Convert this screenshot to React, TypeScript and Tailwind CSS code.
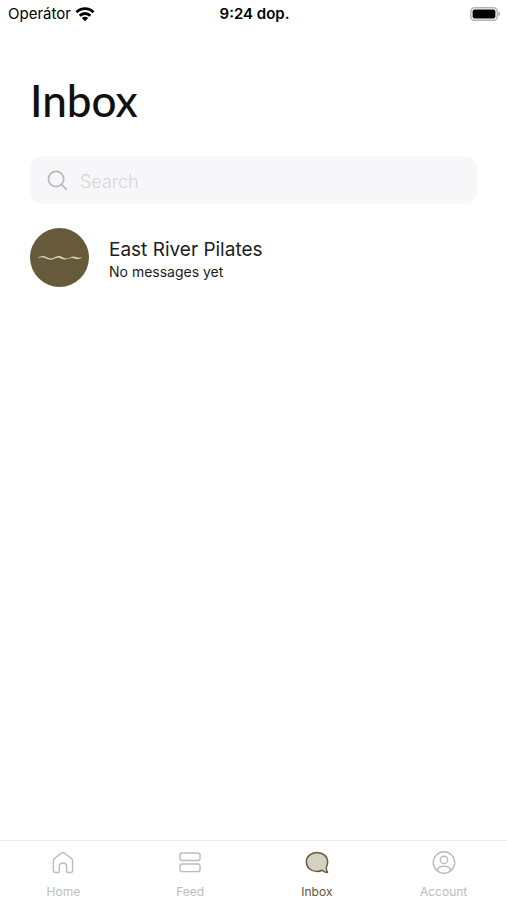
import type { ReactNode } from "react";

function WifiIcon() {
    return (
        <svg width="20" height="15" viewBox="0 0 20 15" fill="none" stroke="#000" strokeWidth="2.8" aria-hidden="true">
            <path d="M1.5 5.2a12 12 0 0 1 17 0" />
            <path d="M4.7 8.700a7.500 7.500 0 0 1 10.600 0" />
            <path d="M10 14.200 6.800 11.100a4.500 4.500 0 0 1 6.400 0z" fill="#000" stroke="none" />
        </svg>
    );
}

function BatteryIcon() {
    return (
        <svg width="31" height="14" viewBox="0 0 31 14" aria-hidden="true">
            <rect x="0.8" y="0.8" width="26.4" height="12.4" rx="3.6" fill="#fff" stroke="#b3b3b3" strokeWidth="1.4" />
            <rect x="2.6" y="2.6" width="22.8" height="8.8" rx="1.8" fill="#000" />
            <path d="M28.4 4.8c1.2.3 1.9 1.2 1.9 2.2s-.7 1.9-1.9 2.2z" fill="#b3b3b3" />
        </svg>
    );
}

function HomeIcon() {
    return (
        <svg width="24" height="24" viewBox="0 0 24 24" fill="none" stroke="currentColor" strokeWidth="1.5" strokeLinejoin="round" aria-hidden="true">
            <path d="M2 10.200c0-.9.4-1.700 1.100-2.300l7.100-5.600c1.100-.8 2.500-.8 3.600 0l7.100 5.600c.7.600 1.100 1.400 1.100 2.300v10.400c0 1-.8 1.800-1.800 1.800h-3.400c-.6 0-1-.4-1-1v-5.200c0-2.100-1.600-3.700-3.800-3.700s-3.800 1.600-3.800 3.700v5.200c0 .6-.4 1-1 1H3.800c-1 0-1.800-.8-1.800-1.800z" />
        </svg>
    );
}

function FeedIcon() {
    return (
        <svg width="24" height="24" viewBox="0 0 24 24" fill="none" stroke="currentColor" strokeWidth="1.5" aria-hidden="true">
            <rect x="1.5" y="2" width="21" height="8" rx="2.500" />
            <rect x="1.5" y="13.5" width="21" height="8" rx="2.500" />
        </svg>
    );
}

function InboxIcon() {
    return (
        <svg width="24" height="24" viewBox="0 0 24 24" fill="#d3d0c4" stroke="#665a3a" strokeWidth="1.5" strokeLinejoin="round" aria-hidden="true">
            <path d="M12 1.500C5.700 1.500.9 5.700.9 11.400s4.800 9.900 11.100 9.900c1.900 0 3.800-.4 5.400-1.200 1.500 1.500 3.300 2.200 5.600 2.300-.8-1.500-1.300-3.300-1.400-5.200 1-1.700 1.500-3.600 1.500-5.800C23.100 5.700 18.300 1.500 12 1.500z" />
        </svg>
    );
}

function AccountIcon() {
    return (
        <svg width="24" height="24" viewBox="0 0 24 24" fill="none" stroke="currentColor" strokeWidth="1.5" aria-hidden="true">
            <circle cx="12" cy="12" r="11.200" />
            <circle cx="12" cy="9.300" r="3.900" />
            <path d="M4.300 20c1.200-2.400 4.200-4 7.700-4s6.500 1.600 7.700 4" />
        </svg>
    );
}

type TabProps = {
    label: string;
    icon: ReactNode;
    active?: boolean;
};

function Tab({ label, icon, active = false }: TabProps) {
    return (
        <a
            href="#"
            aria-current={active ? "page" : undefined}
            className={`flex flex-1 flex-col items-center gap-2.5 pt-2.5 text-xs ${active ? "text-[#5c5238]" : "text-[#bdbdbd]"}`}
        >
            {icon}
            <span>{label}</span>
        </a>
    );
}

export default function App() {
    return (
        <div className="flex min-h-screen flex-col bg-white font-['Inter',sans-serif] text-[#1c1c1c]">
            <header className="grid h-7 grid-cols-3 items-center pr-1.5 pl-2 text-[15px] text-black">
                <div className="flex items-center gap-1">
                    <span>Operátor</span>
                    <WifiIcon />
                </div>
                <span className="text-center font-semibold">9:24 dop.</span>
                <div className="flex justify-end">
                    <BatteryIcon />
                </div>
            </header>

            <main className="flex-1 px-[30px] pt-12">
                <h1 className="font-['Lato',sans-serif] text-[44px] leading-[48px] font-medium text-[#111]">Inbox</h1>

                <label className="mt-8 flex h-12 items-center gap-3 rounded-xl bg-[#f7f7fa] px-[17px]">
                    <svg width="21" height="21" viewBox="0 0 22 22" fill="none" stroke="#b9b9bb" strokeWidth="1.8" strokeLinecap="round" aria-hidden="true">
                        <circle cx="9.5" cy="9.5" r="8" />
                        <path d="m15.3 15.3 5 5" />
                    </svg>
                    <input
                        type="search"
                        aria-label="Search"
                        placeholder="Search"
                        className="min-w-0 flex-1 bg-transparent pt-1 text-lg font-light outline-none placeholder:text-[#d5d5d7]"
                    />
                </label>

                <ul className="mt-6">
                    <li>
                        <a href="#" className="flex items-center gap-5">
                            <svg width="59" height="59" viewBox="0 0 59 59" fill="none" aria-hidden="true">
                                <circle cx="29.5" cy="29.5" r="29.5" fill="#665a3a" />
                                <path
                                    d="M7 30.200c3.500-2.600 6.500-2.800 9.500-1.200 3.500 2 5.500 1.900 8.500 0 3.500-1.700 6-1.200 8.500.8 2.500 1.300 5 .8 7.500-.8 4-2 6 2.200 11.500 0-4.500 4-7.500 1.200-10.500 1-2.500-.1-5 2.200-9 1.200-3.500-1.400-5-2.200-8-.8-3.500 1.700-6 1.700-9.500-.1-3-1.500-5-1.300-8.500-.1z"
                                    fill="#d8cfb4"
                                />
                            </svg>
                            <div className="pt-1">
                                <h2 className="text-[19px] leading-6">East River Pilates</h2>
                                <p className="text-sm leading-5">No messages yet</p>
                            </div>
                        </a>
                    </li>
                </ul>
            </main>

            <nav className="flex h-[60px] border-t border-[#efefef]">
                <Tab label="Home" icon={<HomeIcon />} />
                <Tab label="Feed" icon={<FeedIcon />} />
                <Tab label="Inbox" icon={<InboxIcon />} active />
                <Tab label="Account" icon={<AccountIcon />} />
            </nav>
        </div>
    );
}
